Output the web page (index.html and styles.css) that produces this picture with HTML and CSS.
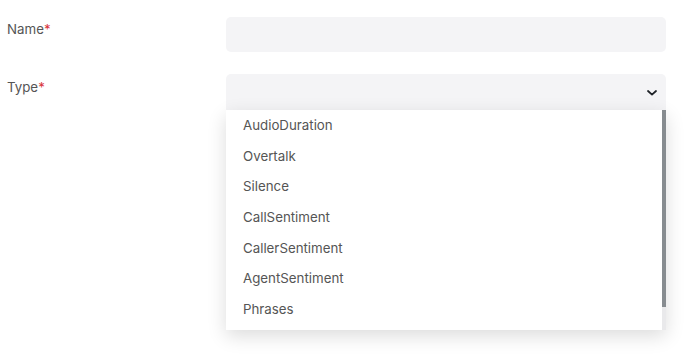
FILE: index.html
```html
<!DOCTYPE html>
<html lang="en">
<head>
    <meta charset="UTF-8">
    <meta name="viewport" content="width=device-width, initial-scale=1.0">
    <title>New Rule</title>
    <link rel="stylesheet" href="styles.css">
</head>
<body>

    <form class="form">
        <div class="row">
            <label class="label" for="name">Name<span class="req">*</span></label>
            <input class="field" type="text" id="name">
        </div>

        <div class="row">
            <label class="label label-type">Type<span class="req">*</span></label>
            <div class="select-wrap">
                <div class="field select">
                    <svg class="chevron" width="10" height="6" viewBox="0 0 10 6">
                        <path d="M1 1 L5 4.6 L9 1" fill="none" stroke="#1f2328" stroke-width="1.8" stroke-linecap="round" stroke-linejoin="round"/>
                    </svg>
                </div>
                <!-- lista desplegable -->
                <div class="menu">
                    <ul class="options">
                        <li>AudioDuration</li>
                        <li>Overtalk</li>
                        <li>Silence</li>
                        <li>CallSentiment</li>
                        <li>CallerSentiment</li>
                        <li>AgentSentiment</li>
                        <li>Phrases</li>
                    </ul>
                    <div class="scrollbar"><div class="thumb"></div></div>
                </div>
            </div>
        </div>
    </form>

</body>
</html>
```

FILE: styles.css
```css
html, body {
    min-height: 100vh;
}

body {
    font-family: Inter, "Noto Sans", sans-serif;
    margin: 0;
    padding: 0;
    background: #fff;
    color: #555;
}

.form {
    display: flex;
    flex-direction: column;
    gap: 22px;
    padding: 17px 26px 0 7px;
}

.row {
    display: flex;
    align-items: flex-start;
}

.label {
    width: 219px;
    flex: none;
    font-size: 13.3px;
    line-height: 16px;
    padding-top: 4px;
    color: #555;
}

.label-type {
    padding-top: 5px;
}

.req {
    color: #d9363e;
}

.field {
    flex: 1;
    height: 35px;
    box-sizing: border-box;
    border: none;
    border-radius: 5px;
    background-color: #f4f4f6;
    outline: none;
}

.select-wrap {
    flex: 1;
    position: relative;
}

.select {
    height: 36px;
    display: flex;
    align-items: center;
    justify-content: flex-end;
    padding-right: 9px;
    border-radius: 5px 5px 0 0;
}

.chevron {
    display: block;
    margin-top: 2px;
}

.menu {
    position: absolute;
    top: 36px;
    left: 0;
    right: 0;
    height: 220px;
    display: flex;
    background: #fff;
    box-shadow: 0 6px 18px rgba(0, 0, 0, 0.14);
    z-index: 10;
}

.options {
    flex: 1;
    margin: 0;
    padding: 0;
    list-style: none;
}

.options li {
    height: 30.7px;
    line-height: 30.7px;
    padding-left: 17px;
    font-size: 13.3px;
    color: #555;
}

.scrollbar {
    width: 4px;
    background: #e9e9eb;
}

.thumb {
    height: 197px;
    background: #878c90;
}
```
